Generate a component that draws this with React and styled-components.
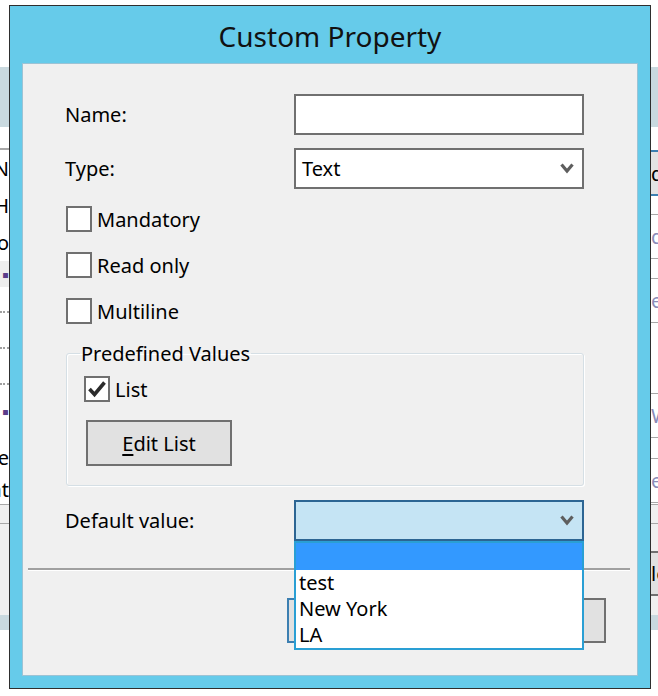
import React from 'react';
import styled, { createGlobalStyle } from 'styled-components';

const GlobalStyle = createGlobalStyle`
    html, body {
        margin: 0;
        padding: 0;
        background: #ffffff;
    }
    body {
        width: 658px;
        height: 696px;
        overflow: hidden;
        font-family: 'Noto Sans', 'Open Sans', sans-serif;
        color: #000000;
    }
    * {
        box-sizing: border-box;
    }
`;

const Screen = styled.div`
    position: relative;
    width: 658px;
    height: 696px;
    overflow: hidden;
    font-size: 20px;
`;

/* the application window behind the dialog */
const Backdrop = styled.div`
    display: flex;
    flex-direction: column;
    height: 100%;
    padding-top: 67px;
`;

const Band = styled.div`
    height: ${(p) => p.h}px;
    flex-shrink: 0;
    background: #c9d9df;
`;

const Body = styled.div`
    display: flex;
    justify-content: space-between;
    height: 377px;
    flex-shrink: 0;
`;

const Footer = styled.div`
    display: flex;
    flex-direction: column;
    height: 111px;
    flex-shrink: 0;
    background: #f0f0f0;
    border-top: 1px solid #a8a8a8;
`;

const FooterRule = styled.div`
    margin-top: 18px;
    border-top: 1px solid #a8a8a8;
`;

const FooterButtons = styled.div`
    display: flex;
    justify-content: flex-end;
    margin-top: 27px;
`;

const FooterButton = styled.div`
    width: 40px;
    height: 45px;
    margin-right: -33px;
    display: flex;
    align-items: center;
    background: #e1e1e1;
    border-top: 2px solid #707070;
    border-bottom: 2px solid #707070;
    line-height: 1;
`;

const LeftList = styled.div`
    width: 9px;
    overflow: hidden;
    display: flex;
    flex-direction: column;
    padding-top: 21px;
`;

const ListRow = styled.div`
    height: ${(p) => p.h}px;
    display: flex;
    justify-content: flex-end;
    align-items: center;
    white-space: nowrap;
    background: ${(p) => p.bg || 'transparent'};
    border-top: ${(p) => (p.rule ? '2px solid #a8a8a8' : 'none')};
    border-bottom: ${(p) => (p.dotted ? '2px dotted #a0a0a0' : 'none')};
    color: ${(p) => p.tint || '#000'};
`;

const RightForm = styled.div`
    width: 7px;
    overflow: hidden;
    display: flex;
    flex-direction: column;
    padding-top: 23px;
`;

const FormRow = styled.div`
    height: ${(p) => p.h}px;
    flex-shrink: 0;
    display: flex;
    align-items: center;
    white-space: nowrap;
    background: ${(p) => p.bg || 'transparent'};
    border-top: ${(p) => (p.edge ? `${p.edgeW}px solid ${p.edge}` : 'none')};
    border-bottom: ${(p) => (p.edge ? `${p.edgeW}px solid ${p.edge}` : 'none')};
    color: ${(p) => p.tint || '#000'};
    margin-bottom: ${(p) => p.after || 0}px;
`;

/* the dialog window */
const Dialog = styled.div`
    position: absolute;
    left: 9px;
    top: 5px;
    width: 642px;
    height: 684px;
    border: 1px solid #2e2e2e;
    background: #66cbea;
    display: flex;
    flex-direction: column;
    padding: 0 12px 12px;
`;

const TitleBar = styled.div`
    height: 57px;
    flex-shrink: 0;
    display: flex;
    align-items: center;
    justify-content: center;
    padding-top: 3px;
    font-size: 28px;
    color: #111111;
`;

const Content = styled.div`
    flex: 1;
    background: #f0f0f0;
    border: 1px solid #9cc3d5;
    padding-top: 30px;
    display: flex;
    flex-direction: column;
`;

const Form = styled.div`
    padding: 0 53px 0 42px;
    display: flex;
    flex-direction: column;
`;

const FieldRow = styled.div`
    display: grid;
    grid-template-columns: 229px 1fr;
    align-items: center;
    margin-top: ${(p) => p.top || 0}px;
`;

const Label = styled.div`
    line-height: 1;
`;

const Input = styled.div`
    position: relative;
    height: 41px;
    border: 2px solid ${(p) => (p.active ? '#2c6593' : '#707070')};
    background: ${(p) => (p.active ? '#c5e4f4' : '#ffffff')};
    display: flex;
    align-items: center;
    justify-content: space-between;
    padding: 0 8px 0 6px;
`;

const Chevron = () => (
    <svg width="14" height="12" viewBox="0 0 14 12">
        <polyline
            points="1.5,1.5 7,8 12.5,1.5"
            fill="none"
            stroke="#5e5e5e"
            strokeWidth="3.2"
            strokeLinejoin="miter"
        />
    </svg>
);

const CheckRow = styled.div`
    display: flex;
    align-items: center;
    gap: 5px;
    height: 26px;
    margin-top: ${(p) => p.top || 0}px;
    padding-left: ${(p) => p.indent || 0}px;
`;

const Box = styled.div`
    width: 26px;
    height: 26px;
    flex-shrink: 0;
    border: 2px solid #707070;
    background: #ffffff;
    display: flex;
    align-items: center;
    justify-content: center;
`;

const Check = () => (
    <svg width="20" height="18" viewBox="0 0 20 18">
        <path d="M2.5 9 L7.5 14.5 L17.5 2.5" fill="none" stroke="#2b2b2b" strokeWidth="3.6" />
    </svg>
);

const Group = styled.fieldset`
    margin: 16px 0 0 1px;
    width: 518px;
    padding: 0 17px 19px;
    border: 1px solid #d5dfe5;
    border-radius: 3px;
    box-shadow: 1px 1px 0 #ffffff, inset 1px 1px 0 #ffffff;
    min-width: 0;
`;

const Legend = styled.legend`
    padding: 0 1px;
    margin-left: -4px;
    line-height: 27px;
`;

const Button = styled.div`
    width: ${(p) => p.w}px;
    height: ${(p) => p.h}px;
    display: flex;
    align-items: center;
    justify-content: center;
    background: #e1e1e1;
    border: 2px solid ${(p) => (p.primary ? '#3c7fb1' : '#707070')};
    margin-top: ${(p) => p.top || 0}px;
    margin-left: ${(p) => p.left || 0}px;
    u {
        text-decoration-thickness: 2px;
        text-underline-offset: 3px;
    }
`;

const Separator = styled.div`
    margin: 27px 7px 0 5px;
    border-top: 2px solid #a0a0a0;
    border-bottom: 1px solid #ffffff;
`;

const ButtonRow = styled.div`
    display: flex;
    justify-content: flex-end;
    gap: 29px;
    margin-top: 27px;
    padding-right: 31px;
`;

const ComboWrap = styled.div`
    position: relative;
`;

const DropList = styled.div`
    position: absolute;
    top: 100%;
    left: 0;
    width: 100%;
    z-index: 2;
    border: 2px solid #2a9fd4;
    background: #ffffff;
`;

const DropItem = styled.div`
    height: ${(p) => (p.selected ? 27 : 26)}px;
    display: flex;
    align-items: center;
    padding-left: 3px;
    line-height: 1;
    background: ${(p) => (p.selected ? '#3399ff' : '#ffffff')};
`;

const choices = ['', 'test', 'New York', 'LA'];

const App = () => {
    return (
        <Screen>
            <GlobalStyle />
            <Backdrop>
                <Band h={60} />
                <Body>
                    <LeftList>
                        <ListRow h={38} rule>N</ListRow>
                        <ListRow h={38}>H</ListRow>
                        <ListRow h={37}>o</ListRow>
                        <ListRow h={26} bg="#eeeeee" tint="#5a3d8a">
                            ▪
                        </ListRow>
                        <ListRow h={26} dotted />
                        <ListRow h={36} dotted />
                        <ListRow h={36} dotted />
                        <ListRow h={53} tint="#5a3d8a">
                            ▪
                        </ListRow>
                        <ListRow h={38}>e</ListRow>
                        <ListRow h={26}>at</ListRow>
                    </LeftList>
                    <RightForm>
                        <FormRow h={46} bg="#e3e3e3" edge="#3c7fb1" edgeW={2} after={18}>
                            d
                        </FormRow>
                        <FormRow h={45} edge="#a8a8a8" edgeW={1} tint="#8c8cb8" after={19}>
                            di
                        </FormRow>
                        <FormRow h={45} edge="#a8a8a8" edgeW={1} tint="#8c8cb8" after={70}>
                            e
                        </FormRow>
                        <FormRow h={45} edge="#a8a8a8" edgeW={1} tint="#8c8cb8" after={20}>
                            W
                        </FormRow>
                        <FormRow h={45} edge="#a8a8a8" edgeW={1} tint="#8c8cb8">
                            e
                        </FormRow>
                    </RightForm>
                </Body>
                <Footer>
                    <FooterRule />
                    <FooterButtons>
                        <FooterButton>lo</FooterButton>
                    </FooterButtons>
                </Footer>
                <Band h={15} />
            </Backdrop>

            <Dialog>
                <TitleBar>Custom Property</TitleBar>
                <Content>
                    <Form>
                        <FieldRow>
                            <Label>Name:</Label>
                            <Input />
                        </FieldRow>
                        <FieldRow top={13}>
                            <Label>Type:</Label>
                            <Input>
                                <span>Text</span>
                                <Chevron />
                            </Input>
                        </FieldRow>
                        <CheckRow top={17} indent={1}>
                            <Box />
                            Mandatory
                        </CheckRow>
                        <CheckRow top={20} indent={1}>
                            <Box />
                            Read only
                        </CheckRow>
                        <CheckRow top={20} indent={1}>
                            <Box />
                            Multiline
                        </CheckRow>
                        <Group>
                            <Legend>Predefined Values</Legend>
                            <CheckRow top={9}>
                                <Box>
                                    <Check />
                                </Box>
                                List
                            </CheckRow>
                            <Button w={146} h={46} top={18} left={2}>
                                <span>
                                    <u>E</u>dit List
                                </span>
                            </Button>
                        </Group>
                        <FieldRow top={14}>
                            <Label>Default value:</Label>
                            <ComboWrap>
                                <Input active>
                                    <span />
                                    <Chevron />
                                </Input>
                                <DropList>
                                    {choices.map((c, i) => (
                                        <DropItem key={i} selected={i === 0}>
                                            {c}
                                        </DropItem>
                                    ))}
                                </DropList>
                            </ComboWrap>
                        </FieldRow>
                    </Form>
                    <Separator />
                    <ButtonRow>
                        <Button w={145} h={45} primary>
                            OK
                        </Button>
                        <Button w={145} h={45}>
                            Cancel
                        </Button>
                    </ButtonRow>
                </Content>
            </Dialog>
        </Screen>
    );
};

export default App;
